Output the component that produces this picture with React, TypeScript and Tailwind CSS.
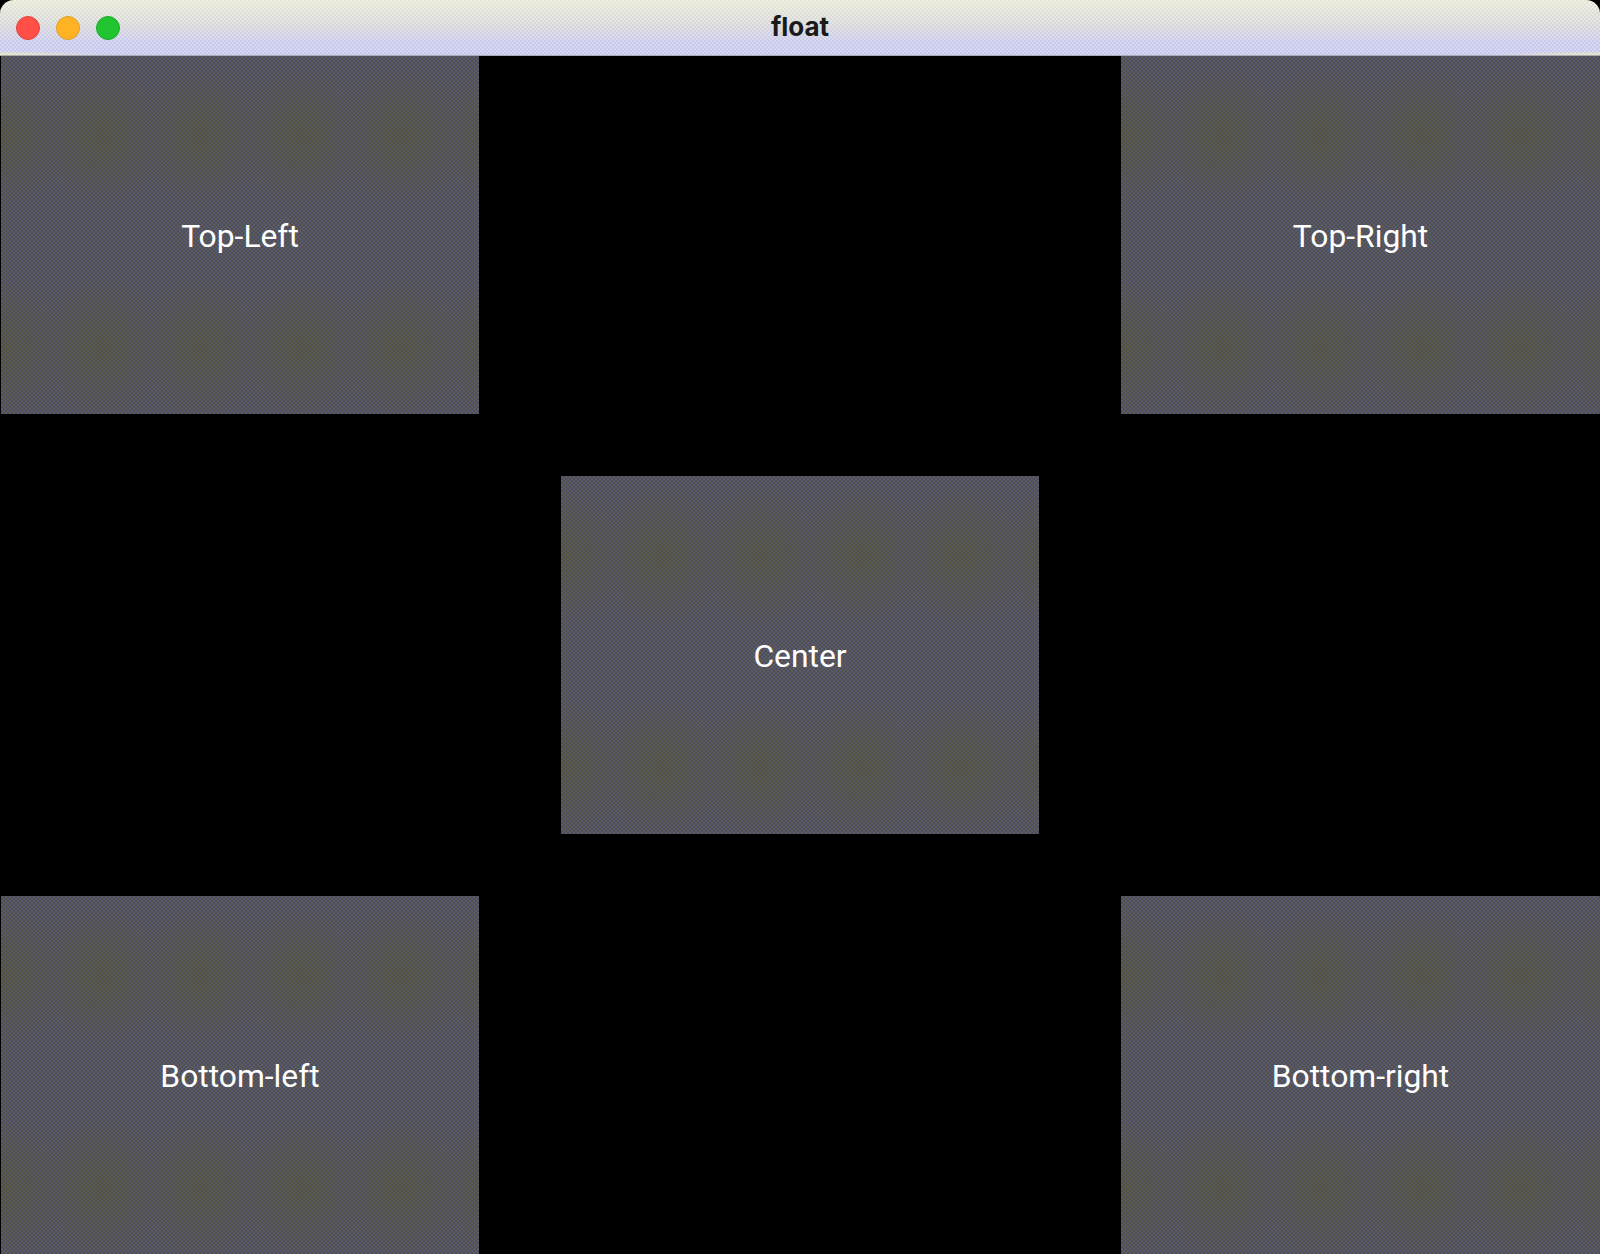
const panelCls = "flex h-[358px] items-center justify-center rounded-[1px] bg-[radial-gradient(circle,rgba(88,88,24,0.28)_0,rgba(88,88,24,0)_58%),repeating-conic-gradient(#50504a_0_25%,#5a5a74_0_50%)] bg-[length:100px_212px,4px_4px] bg-[position:50px_-26px,0_0] pt-[3px] text-[31.8px] text-white";

function Panel({ label, wide }: { label: string; wide?: boolean }) {
  return <div className={`${panelCls} ${wide ? "w-[479px]" : "w-[478px]"}`}>{label}</div>;
}

export default function App() {
  return (
    <div className="flex h-[1254px] w-[1600px] flex-col overflow-hidden bg-black font-['Roboto',sans-serif]">
      <div className="relative flex h-[56px] shrink-0 items-center justify-center rounded-t-[14px] border-b border-[#a9a9b4] bg-[repeating-conic-gradient(rgba(255,255,210,0.25)_0_25%,rgba(190,190,225,0.2)_0_50%),radial-gradient(ellipse_at_0%_100%,rgba(240,240,170,0.9)_0,rgba(240,240,170,0)_5%),radial-gradient(ellipse_at_100%_100%,rgba(240,240,170,0.9)_0,rgba(240,240,170,0)_5%),linear-gradient(to_bottom,#eeeede_0%,#dcdce0_45%,#ccccf6_75%,#c8c8f8_100%)] bg-[length:4px_4px,100%_100%,100%_100%,100%_100%] pb-[3px]">
        <div className="absolute left-[16px] top-[16px] flex gap-[16px]">
          <span className="h-[24px] w-[24px] rounded-full border border-[#e0443e] bg-[#ff4f47]" />
          <span className="h-[24px] w-[24px] rounded-full border border-[#dea123] bg-[#ffb324]" />
          <span className="h-[24px] w-[24px] rounded-full border border-[#1aab29] bg-[#1fc42f]" />
        </div>
        <span className="font-['Inter',sans-serif] text-[26px] font-bold text-[#1a1a1a]">float</span>
      </div>
      <div className="flex flex-1 flex-col justify-between pl-px">
        <div className="flex justify-between">
          <Panel label="Top-Left" />
          <Panel label="Top-Right" wide />
        </div>
        <div className="flex justify-center pr-px">
          <Panel label="Center" />
        </div>
        <div className="flex justify-between">
          <Panel label="Bottom-left" />
          <Panel label="Bottom-right" wide />
        </div>
      </div>
    </div>
  );
}
